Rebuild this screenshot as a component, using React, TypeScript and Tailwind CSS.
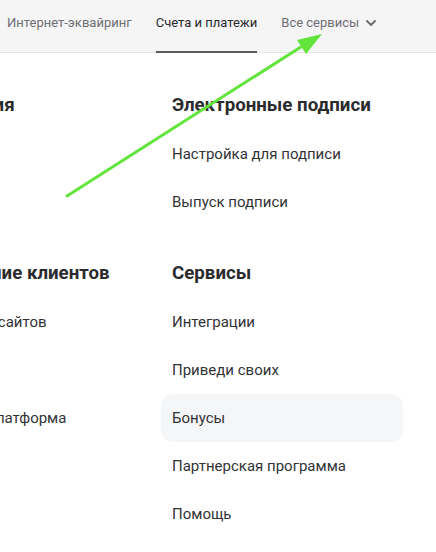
import React from "react";

const TABS = [
  { label: "Интернет-эквайринг", active: false },
  { label: "Счета и платежи", active: true },
];

const SECTIONS_LEFT = [
  { title: "Бухгалтерия", items: ["Отчёты", "Налоги"] },
  { title: "Привлечение клиентов", items: ["Конструктор сайтов", "Реклама", "Платежная платформа"] },
];

const SECTIONS_RIGHT = [
  { title: "Электронные подписи", items: ["Настройка для подписи", "Выпуск подписи"] },
  { title: "Сервисы", items: ["Интеграции", "Приведи своих", "Бонусы", "Партнерская программа", "Помощь"] },
];

function Column({ sections }: { sections: { title: string; items: string[] }[] }) {
  return (
    <div className="flex flex-col gap-[35px]">
      {sections.map((s) => (
        <div key={s.title}>
          <h3 className="px-[11px] text-[18.7px] leading-6 font-bold text-[#2b2b2d] whitespace-nowrap mb-[13px]">
            {s.title}
          </h3>
          {s.items.map((it) => (
            <div
              key={it}
              className={
                "h-12 px-[11px] flex items-center rounded-xl text-[15px] text-[#333336] whitespace-nowrap " +
                (it === "Бонусы" ? "bg-[#f5f6f7]" : "")
              }
            >
              {it}
            </div>
          ))}
        </div>
      ))}
    </div>
  );
}

export default function App() {
  return (
    <div className="relative w-[436px] h-[552px] overflow-hidden bg-white font-['Roboto','Liberation_Sans',sans-serif]">
      {/* верхнее меню */}
      <div className="h-[53px] bg-[#f5f5f6] border-b border-[#e5e5e7] flex items-stretch gap-6 pl-[7px]">
        {TABS.map((t) => (
          <div
            key={t.label}
            className={
              "pt-[13px] text-[13px] leading-5 whitespace-nowrap " +
              (t.active ? "text-[#2a2a2c] border-b-2 border-[#5a5a5c] -mb-px" : "text-[#6e6e72]")
            }
          >
            {t.label}
          </div>
        ))}
        <div className="pt-[13px] flex items-start gap-[6px] text-[13px] leading-5 text-[#6e6e72] whitespace-nowrap">
          Все сервисы
          <svg width="12" height="20" viewBox="0 0 12 20" fill="none">
            <path d="M2 8l4 4 4-4" stroke="#6e6e72" strokeWidth="2" strokeLinecap="round" strokeLinejoin="round" />
          </svg>
        </div>
      </div>

      {/* выпадающее меню */}
      <div className="pt-[40px] ml-[-106px] grid grid-cols-[242px_242px] gap-x-[25px]">
        <Column sections={SECTIONS_LEFT} />
        <Column sections={SECTIONS_RIGHT} />
      </div>

      {/* стрелка поверх скриншота */}
      <svg className="absolute inset-0 pointer-events-none" width="436" height="552" viewBox="0 0 436 552">
        <line x1="67" y1="196" x2="304" y2="45" stroke="#63e43c" strokeWidth="3" strokeLinecap="round" />
        <polygon points="322,34 306,54 297,40" fill="#63e43c" />
      </svg>
    </div>
  );
}
